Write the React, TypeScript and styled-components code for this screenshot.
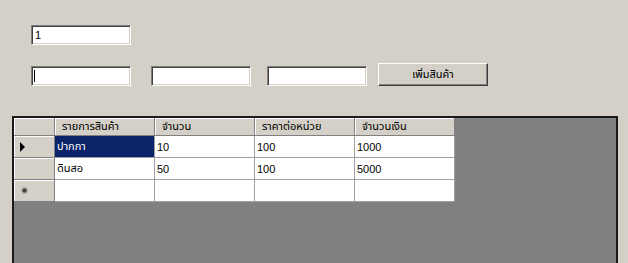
import React from "react";
import styled, { createGlobalStyle } from "styled-components";

const GlobalStyle = createGlobalStyle`
  html, body {
    margin: 0;
    padding: 0;
    background: #d4d0c8;
    overflow: hidden;
  }
  body {
    font-family: Tahoma, "Liberation Sans", "Noto Sans Thai", "Loma", "Garuda", sans-serif;
    font-size: 11px;
    color: #000;
  }
`;

const Form = styled.div`
  width: 628px;
  height: 263px;
  box-sizing: border-box;
  padding-top: 25px;
  display: flex;
  flex-direction: column;
  overflow: hidden;
  background: #d4d0c8;
`;

const TopRow = styled.div`
  display: flex;
  padding-left: 31px;
`;

const InputRow = styled.div`
  display: flex;
  align-items: flex-start;
  margin-top: 18px;
  padding-left: 31px;
  height: 23px;
`;

const TextBox = styled.div<{ $offset?: number; $top?: number }>`
  width: 100px;
  height: 20px;
  box-sizing: border-box;
  margin-left: ${(p) => p.$offset ?? 0}px;
  margin-top: ${(p) => p.$top ?? 0}px;
  background: #fff;
  border: 1px solid;
  border-color: #808080 #fff #fff #808080;
  box-shadow: inset 1px 1px #404040, inset -1px -1px #d4d0c8;
  padding: 0 3px;
  display: flex;
  align-items: center;
  color: #000;
`;

const Caret = styled.span`
  display: block;
  width: 1px;
  height: 12px;
  background: #000;
  margin-left: -1px;
`;

const Button = styled.div<{ $offset?: number }>`
  width: 110px;
  height: 23px;
  box-sizing: border-box;
  margin-left: ${(p) => p.$offset ?? 0}px;
  border: 1px solid;
  border-color: #fff #404040 #404040 #fff;
  box-shadow: inset -1px -1px #808080;
  background: #d4d0c8;
  display: flex;
  align-items: center;
  justify-content: center;
  color: #000;
`;

const GridView = styled.div`
  margin-top: 30px;
  margin-left: 12px;
  width: 606px;
  flex: 1;
  box-sizing: border-box;
  border: 2px solid #1a1a1a;
  border-bottom: none;
  background: #808080;
  display: grid;
  grid-template-columns: 41px 100px 100px 100px 100px;
  grid-template-rows: 18px 22px 22px 22px;
  align-content: start;
  justify-content: start;
`;

const Corner = styled.div`
  background: #d4d0c8;
  border-right: 1px solid #808080;
  border-bottom: 1px solid #808080;
  box-shadow: inset 1px 1px #fff;
`;

const HeaderCell = styled.div`
  background: #d4d0c8;
  border-right: 1px solid #808080;
  border-bottom: 1px solid #808080;
  box-shadow: inset 1px 1px #fff;
  padding-left: 7px;
  display: flex;
  align-items: center;
  white-space: nowrap;
  overflow: hidden;
`;

const RowHeader = styled.div`
  background: #d4d0c8;
  border-right: 1px solid #808080;
  border-bottom: 1px solid #808080;
  box-shadow: inset 1px 1px #fff;
  display: flex;
  align-items: center;
  padding-left: 6px;
`;

const Cell = styled.div<{ $selected?: boolean }>`
  background: ${(p) => (p.$selected ? "#0a246a" : "#fff")};
  color: ${(p) => (p.$selected ? "#fff" : "#000")};
  border-right: 1px solid #a0a0a0;
  border-bottom: 1px solid #a0a0a0;
  padding-left: 2px;
  display: flex;
  align-items: center;
  white-space: nowrap;
  overflow: hidden;
`;

const CurrentRowIcon = () => (
  <svg width="6" height="10" viewBox="0 0 6 10">
    <path d="M0 0 L5 5 L0 10 Z" fill="#000" />
  </svg>
);

const NewRowIcon = () => (
  <svg width="7" height="7" viewBox="0 0 7 7" style={{ marginLeft: 1 }}>
    <circle cx="3.5" cy="3.5" r="2.2" fill="#404040" />
    <circle cx="3.5" cy="3.5" r="3.2" fill="none" stroke="#a0a0a0" strokeWidth="0.8" />
  </svg>
);

const columns = ["รายการสินค้า", "จำนวน", "ราคาต่อหน่วย", "จำนวนเงิน"];
const rows = [
  ["ปากกา", "10", "100", "1000"],
  ["ดินสอ", "50", "100", "5000"],
];

export default function App() {
  return (
    <>
      <GlobalStyle />
      <Form>
        <TopRow>
          <TextBox>1</TextBox>
        </TopRow>
        <InputRow>
          <TextBox $top={3}>
            <Caret />
          </TextBox>
          <TextBox $top={3} $offset={20} />
          <TextBox $top={3} $offset={16} />
          <Button $offset={11}>เพิ่มสินค้า</Button>
        </InputRow>
        <GridView>
          <Corner />
          {columns.map((c) => (
            <HeaderCell key={c}>{c}</HeaderCell>
          ))}
          {rows.map((r, i) => (
            <React.Fragment key={i}>
              <RowHeader>{i === 0 ? <CurrentRowIcon /> : null}</RowHeader>
              {r.map((v, j) => (
                <Cell key={j} $selected={i === 0 && j === 0}>
                  {v}
                </Cell>
              ))}
            </React.Fragment>
          ))}
          <RowHeader>
            <NewRowIcon />
          </RowHeader>
          {columns.map((c) => (
            <Cell key={c} />
          ))}
        </GridView>
      </Form>
    </>
  );
}
